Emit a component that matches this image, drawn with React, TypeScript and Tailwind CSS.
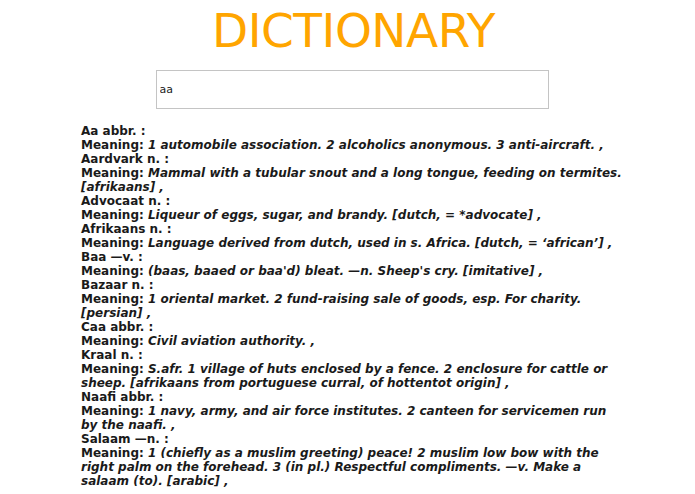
import React from "react";

type Entry = { word: string; meaning: string };

const entries: Entry[] = [
  { word: "Aa abbr. :", meaning: "1 automobile association. 2 alcoholics anonymous. 3 anti-aircraft. ," },
  { word: "Aardvark n. :", meaning: "Mammal with a tubular snout and a long tongue, feeding on termites. [afrikaans] ," },
  { word: "Advocaat n. :", meaning: "Liqueur of eggs, sugar, and brandy. [dutch, = *advocate] ," },
  { word: "Afrikaans n. :", meaning: "Language derived from dutch, used in s. Africa. [dutch, = \u2018african\u2019] ," },
  { word: "Baa \u2014v. :", meaning: "(baas, baaed or baa'd) bleat. \u2014n. Sheep's cry. [imitative] ," },
  { word: "Bazaar n. :", meaning: "1 oriental market. 2 fund-raising sale of goods, esp. For charity. [persian] ," },
  { word: "Caa abbr. :", meaning: "Civil aviation authority. ," },
  { word: "Kraal n. :", meaning: "S.afr. 1 village of huts enclosed by a fence. 2 enclosure for cattle or sheep. [afrikaans from portuguese curral, of hottentot origin] ," },
  { word: "Naafi abbr. :", meaning: "1 navy, army, and air force institutes. 2 canteen for servicemen run by the naafi. ," },
  { word: "Salaam \u2014n. :", meaning: "1 (chiefly as a muslim greeting) peace! 2 muslim low bow with the right palm on the forehead. 3 (in pl.) Respectful compliments. \u2014v. Make a salaam (to). [arabic] ," },
];

export default function App() {
  return (
    <div className="min-h-screen bg-white font-['DejaVu_Sans',sans-serif]">
      <h1 className="pl-[12px] pt-[4px] text-center text-[47px] leading-[54px] tracking-[-0.5px] text-[#ffa500]">
        DICTIONARY
      </h1>
      <div className="mt-[12px] flex justify-center">
        <input
          defaultValue="aa"
          className="ml-[9px] h-[39px] w-[393px] border border-[#c4c4c4] px-[3px] text-[11px] text-[#222] outline-none"
        />
      </div>
      <div className="ml-[81px] mt-[15px] w-[545px] text-[12px] font-bold leading-[14px] text-[#1a1a1a]">
        {entries.map((e) => (
          <div key={e.word}>
            <div>{e.word}</div>
            <div>
              Meaning: <i>{e.meaning}</i>
            </div>
          </div>
        ))}
      </div>
    </div>
  );
}
